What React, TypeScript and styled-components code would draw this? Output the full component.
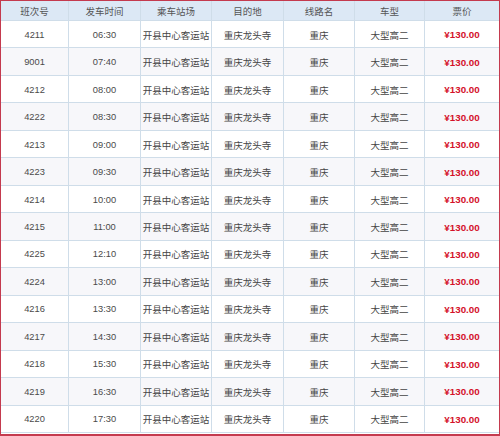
import React from "react";
import styled, { createGlobalStyle } from "styled-components";

const Global = createGlobalStyle`
  html, body { margin: 0; padding: 0; background: #fff; }
  body { font-family: "Noto Sans CJK SC", "Liberation Sans", sans-serif; }
`;

const Frame = styled.div`
  width: 500px;
  height: 436px;
  box-sizing: border-box;
  border: 1px solid #c43a4e;
  border-bottom-width: 2px;
  overflow: hidden;
  background: #fff;
`;

const Grid = styled.div`
  display: grid;
  grid-template-columns: 68px 72px 71px 72px 71px 70px 1fr;
  grid-template-rows: 20px repeat(15, 27.47px);
`;

const Cell = styled.div<{ $head?: boolean; $alt?: boolean; $last?: boolean }>`
  box-sizing: border-box;
  display: flex;
  align-items: center;
  justify-content: center;
  border-right: ${(p) => (p.$last ? "none" : "1px solid #cfdde9")};
  border-bottom: 1px solid #cfdde9;
  background: ${(p) => (p.$head ? "#dce8f5" : p.$alt ? "#f7f7fa" : "#ffffff")};
  color: ${(p) => (p.$head ? "#555" : "#444")};
  font-size: 9.5px;
  white-space: nowrap;
  padding-top: ${(p) => (p.$head ? "0" : "1px")};
`;

const Num = styled.span`
  font-family: "Liberation Sans", Arial, sans-serif;
  font-size: 9.3px;
  color: #4a4a4a;
`;

const Price = styled.span`
  font-family: "Liberation Sans", Arial, sans-serif;
  font-weight: bold;
  font-size: 9.8px;
  color: #d4112a;
`;

const headers = ["班次号", "发车时间", "乘车站场", "目的地", "线路名", "车型", "票价"];

const rows: [string, string][] = [
  ["4211", "06:30"],
  ["9001", "07:40"],
  ["4212", "08:00"],
  ["4222", "08:30"],
  ["4213", "09:00"],
  ["4223", "09:30"],
  ["4214", "10:00"],
  ["4215", "11:00"],
  ["4225", "12:10"],
  ["4224", "13:00"],
  ["4216", "13:30"],
  ["4217", "14:30"],
  ["4218", "15:30"],
  ["4219", "16:30"],
  ["4220", "17:30"],
];

export default function App() {
  return (
    <>
      <Global />
      <Frame>
        <Grid>
          {headers.map((h, i) => (
            <Cell key={h} $head $last={i === headers.length - 1}>
              {h}
            </Cell>
          ))}
          {rows.map(([id, time], r) => {
            const alt = r % 2 === 1;
            return (
              <React.Fragment key={id}>
                <Cell $alt={alt}><Num>{id}</Num></Cell>
                <Cell $alt={alt}><Num>{time}</Num></Cell>
                <Cell $alt={alt}>开县中心客运站</Cell>
                <Cell $alt={alt}>重庆龙头寺</Cell>
                <Cell $alt={alt}>重庆</Cell>
                <Cell $alt={alt}>大型高二</Cell>
                <Cell $alt={alt} $last><Price>¥130.00</Price></Cell>
              </React.Fragment>
            );
          })}
        </Grid>
      </Frame>
    </>
  );
}
